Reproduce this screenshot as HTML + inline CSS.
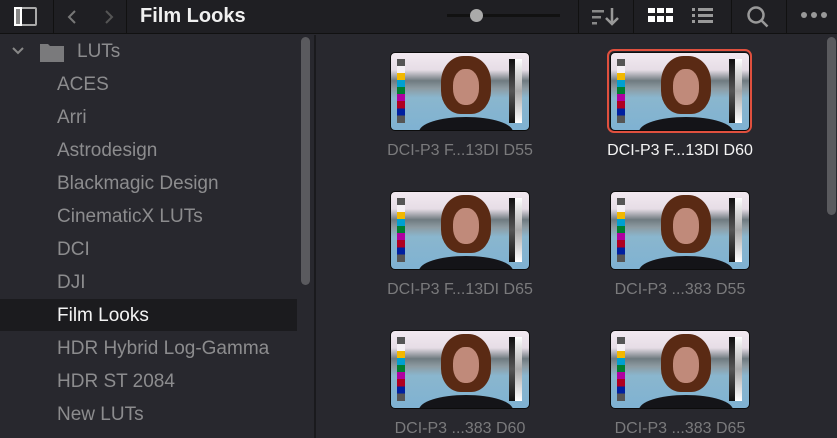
<!DOCTYPE html>
<html><head><style>
*{margin:0;padding:0;box-sizing:border-box}
body{width:837px;height:438px;overflow:hidden;background:#28282e;font-family:"Liberation Sans",sans-serif;position:relative}
.tb{position:absolute;left:0;top:0;width:837px;height:34px;background:#1f1f23;border-bottom:1px solid #111}
.sep{position:absolute;top:0;width:1px;height:34px;background:#111}
.side{position:absolute;left:0;top:35px;width:314px;height:403px;background:#28282e}
.div{position:absolute;left:314px;top:35px;width:2px;height:403px;background:#1a1a1d}
.item{position:absolute;left:57px;font-size:19px;color:#8c8c8e;line-height:22px}
.sel{position:absolute;left:0;top:299px;width:297px;height:32px;background:#1b1b1e}
.sb{position:absolute;background:#5a5a5e;border-radius:5px;width:9px}
.th{position:absolute;width:140px;height:79px;border-radius:5px;border:1.5px solid #0c0c0c;overflow:hidden;
background:linear-gradient(#f2e9f0 0%,#e6dde6 22%,#6f7b80 36%,#8d9ba2 46%,#8ab6ce 58%,#7fb2d2 100%)}
.th .cb{position:absolute;left:6px;top:6px;width:8px;height:64px;background:linear-gradient(#555 0 11%,#f5f0f5 11% 22%,#f2b800 22% 33%,#00a0d0 33% 44%,#008030 44% 55%,#b000a0 55% 66%,#b00020 66% 77%,#0020a0 77% 88%,#555 88%)}
.th .rb{position:absolute;left:118px;top:6px;width:6px;height:64px;background:linear-gradient(#111,#555 50%,#111)}
.th .rw{position:absolute;left:124px;top:6px;width:7px;height:64px;background:linear-gradient(#fff,#aaa 50%,#fff)}
.th .hair{position:absolute;left:50px;top:3px;width:50px;height:58px;border-radius:45% 45% 40% 40%;background:#5a2a14}
.th .face{position:absolute;left:62px;top:16px;width:26px;height:36px;border-radius:45%;background:#c08a7a}
.th .sh{position:absolute;left:28px;top:64px;width:94px;height:30px;border-radius:50% 50% 0 0;background:#141418}
.red{position:absolute;border:2px solid #e0503e;border-radius:7px}
.lb{position:absolute;width:200px;text-align:center;font-size:16px;color:#7a7a7c}
</style></head><body>
<div class="tb">
 <div style="position:absolute;left:14px;top:7px;width:23px;height:19px;border:2px solid #aaa;border-radius:2px"></div>
 <div style="position:absolute;left:14px;top:7px;width:8px;height:19px;border:2px solid #fff;background:#888"></div>
 <div class="sep" style="left:53px"></div>
 <svg style="position:absolute;left:64px;top:8px" width="60" height="18"><path d="M11 3L5 9l6 6" stroke="#777" stroke-width="2" fill="none"/><path d="M42 3l6 6-6 6" stroke="#555" stroke-width="2" fill="none"/></svg>
 <div class="sep" style="left:126px"></div>
 <div style="position:absolute;left:140px;top:5px;font-size:20px;font-weight:bold;color:#f0f0f0">Film Looks</div>
 <div style="position:absolute;left:447px;top:14px;width:113px;height:3px;background:#111"></div>
 <div style="position:absolute;left:470px;top:9px;width:13px;height:13px;border-radius:50%;background:#aaa"></div>
 <div class="sep" style="left:578px"></div>
 <svg style="position:absolute;left:590px;top:6px" width="34" height="22"><g fill="#888"><rect x="2" y="4" width="12" height="2.5"/><rect x="2" y="10" width="9" height="2.5"/><rect x="2" y="16" width="5" height="2.5"/></g><path d="M22 2v16M16 12l6 6 6-6" stroke="#999" stroke-width="2.5" fill="none"/></svg>
 <div class="sep" style="left:633px"></div>
 <svg style="position:absolute;left:648px;top:8px" width="26" height="18"><g fill="#fff"><rect x="0" y="0" width="7" height="5"/><rect x="9" y="0" width="7" height="5"/><rect x="18" y="0" width="7" height="5"/><rect x="0" y="8" width="7" height="6"/><rect x="9" y="8" width="7" height="6"/><rect x="18" y="8" width="7" height="6"/></g></svg>
 <svg style="position:absolute;left:692px;top:8px" width="24" height="18"><g fill="#999"><rect x="0" y="0" width="3" height="3"/><rect x="6" y="0" width="15" height="3"/><rect x="0" y="6" width="3" height="3"/><rect x="6" y="6" width="15" height="3"/><rect x="0" y="12" width="3" height="3"/><rect x="6" y="12" width="15" height="3"/></g></svg>
 <div class="sep" style="left:731px"></div>
 <svg style="position:absolute;left:746px;top:5px" width="26" height="24"><circle cx="10" cy="10" r="7.5" stroke="#999" stroke-width="2.5" fill="none"/><path d="M15.5 15.5l6 6" stroke="#999" stroke-width="2.5"/></svg>
 <div class="sep" style="left:786px"></div>
 <svg style="position:absolute;left:800px;top:11px" width="32" height="10"><g fill="#999"><circle cx="4" cy="4" r="3"/><circle cx="14" cy="4" r="3"/><circle cx="24" cy="4" r="3"/></g></svg>
</div>
<div class="side">
 <div class="sel" style="top:264px"></div>
</div>
<svg style="position:absolute;left:11px;top:45px" width="14" height="12"><path d="M2 3l5 5 5-5" stroke="#888" stroke-width="2" fill="none"/></svg>
<svg style="position:absolute;left:40px;top:42px" width="24" height="20"><path d="M0 2h8l2 2h14v16H0z" fill="#7a7a7c"/></svg>
<div class="item" style="top:41px;left:77px">LUTs</div>
<div class="item" style="top:74px">ACES</div>
<div class="item" style="top:107px">Arri</div>
<div class="item" style="top:140px">Astrodesign</div>
<div class="item" style="top:173px">Blackmagic Design</div>
<div class="item" style="top:206px">CinematicX LUTs</div>
<div class="item" style="top:239px">DCI</div>
<div class="item" style="top:272px">DJI</div>
<div class="item" style="top:305px;color:#f4f4f4">Film Looks</div>
<div class="item" style="top:338px">HDR Hybrid Log-Gamma</div>
<div class="item" style="top:371px">HDR ST 2084</div>
<div class="item" style="top:404px">New LUTs</div>
<div class="sb" style="left:301px;top:37px;height:248px"></div>
<div class="div"></div>
<div class="sb" style="left:827px;top:37px;height:178px"></div>

<div class="red" style="left:607px;top:49px;width:145px;height:84px"></div>
<div class="th" style="left:390px;top:52px"><div class="hair"></div><div class="face"></div><div class="sh"></div><div class="cb"></div><div class="rb"></div><div class="rw"></div></div>
<div class="th" style="left:610px;top:52px"><div class="hair"></div><div class="face"></div><div class="sh"></div><div class="cb"></div><div class="rb"></div><div class="rw"></div></div>
<div class="th" style="left:390px;top:191px"><div class="hair"></div><div class="face"></div><div class="sh"></div><div class="cb"></div><div class="rb"></div><div class="rw"></div></div>
<div class="th" style="left:610px;top:191px"><div class="hair"></div><div class="face"></div><div class="sh"></div><div class="cb"></div><div class="rb"></div><div class="rw"></div></div>
<div class="th" style="left:390px;top:330px"><div class="hair"></div><div class="face"></div><div class="sh"></div><div class="cb"></div><div class="rb"></div><div class="rw"></div></div>
<div class="th" style="left:610px;top:330px"><div class="hair"></div><div class="face"></div><div class="sh"></div><div class="cb"></div><div class="rb"></div><div class="rw"></div></div>
<div class="lb" style="left:360px;top:142px">DCI-P3 F...13DI D55</div>
<div class="lb" style="left:580px;top:142px;color:#f4f4f4">DCI-P3 F...13DI D60</div>
<div class="lb" style="left:360px;top:281px">DCI-P3 F...13DI D65</div>
<div class="lb" style="left:580px;top:281px">DCI-P3 ...383 D55</div>
<div class="lb" style="left:360px;top:420px">DCI-P3 ...383 D60</div>
<div class="lb" style="left:580px;top:420px">DCI-P3 ...383 D65</div>
</body></html>
